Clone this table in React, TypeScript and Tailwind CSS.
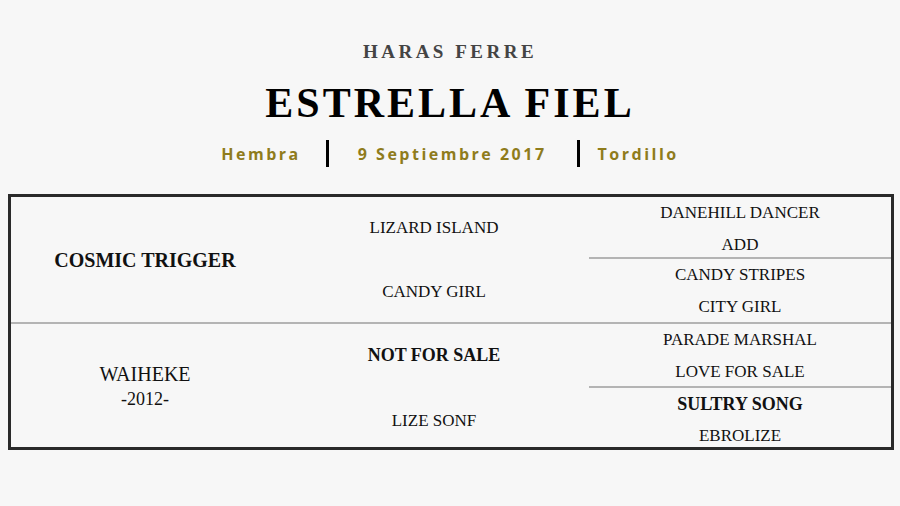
import React from 'react';

const serif = { fontFamily: '"Liberation Serif", "DejaVu Serif", serif' };

const Pair: React.FC<{ top: string; bottom: string; boldTop?: boolean; line?: boolean }> = ({ top, bottom, boldTop, line }) => (
  <div className={`flex-1 flex flex-col items-center justify-center ${line ? 'border-t-2 border-[#b4b4b4]' : ''}`}>
    <span className={boldTop ? 'text-[18px] font-bold leading-[32px]' : 'text-[17px] leading-[32px]'}>{top}</span>
    <span className="text-[17px] leading-[32px]">{bottom}</span>
  </div>
);

const App: React.FC = () => {
  return (
    <div className="w-[900px] h-[506px] bg-[#f7f7f7] text-[#111] overflow-hidden flex flex-col items-center" style={serif}>
      {/* Header */}
      <div className="mt-[40px] text-[19px] font-bold tracking-[3.5px] text-[#444] leading-[24px]">HARAS FERRE</div>
      <div className="mt-[15px] text-[42px] font-bold tracking-[3px] text-black leading-[48px]">ESTRELLA FIEL</div>
      <div
        className="mt-[13px] flex items-center text-[16px] font-bold tracking-[2.5px] text-[#8f7c1c]"
        style={{ fontFamily: '"Open Sans", "Liberation Sans", sans-serif' }}
      >
        <span>Hembra</span>
        <span className="w-[3px] h-[27px] bg-black ml-[25px] mr-[29px]"></span>
        <span>9 Septiembre 2017</span>
        <span className="w-[3px] h-[27px] bg-black ml-[30px] mr-[18px]"></span>
        <span>Tordillo</span>
      </div>

      {/* Pedigree table */}
      <div className="mt-[27px] self-start ml-[8px] w-[886px] h-[256px] border-[3px] border-[#2a2a2a] flex flex-col">
        <div className="h-[125px] flex">
          <div className="w-[268px] flex items-center justify-center">
            <span className="text-[20px] font-bold">COSMIC TRIGGER</span>
          </div>
          <div className="w-[310px] flex flex-col">
            <div className="flex-1 flex items-center justify-center text-[17px] pb-[3px]">LIZARD ISLAND</div>
            <div className="flex-1 flex items-center justify-center text-[17px]">CANDY GIRL</div>
          </div>
          <div className="flex-1 flex flex-col">
            <div className="h-[60px] flex flex-col"><Pair top="DANEHILL DANCER" bottom="ADD" /></div>
            <div className="flex-1 flex flex-col"><Pair top="CANDY STRIPES" bottom="CITY GIRL" line /></div>
          </div>
        </div>
        <div className="flex-1 flex border-t-2 border-[#b4b4b4]">
          <div className="w-[268px] flex flex-col items-center justify-center pb-[2px]">
            <span className="text-[20px] leading-[25px]">WAIHEKE</span>
            <span className="text-[18px] leading-[25px]">-2012-</span>
          </div>
          <div className="w-[310px] flex flex-col">
            <div className="flex-1 flex items-center justify-center text-[18px] font-bold pb-[3px]">NOT FOR SALE</div>
            <div className="flex-1 flex items-center justify-center text-[17px]">LIZE SONF</div>
          </div>
          <div className="flex-1 flex flex-col">
            <div className="h-[62px] flex flex-col"><Pair top="PARADE MARSHAL" bottom="LOVE FOR SALE" /></div>
            <div className="flex-1 flex flex-col"><Pair top="SULTRY SONG" bottom="EBROLIZE" boldTop line /></div>
          </div>
        </div>
      </div>
    </div>
  );
};

export default App;
